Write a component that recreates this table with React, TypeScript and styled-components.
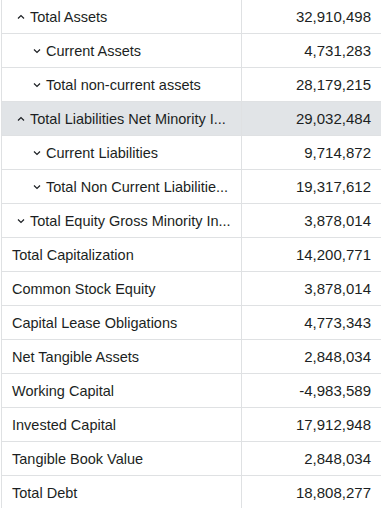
import React from 'react';
import { styled, createGlobalStyle } from 'styled-components';

const GlobalStyle = createGlobalStyle`
  body {
    margin: 0;
    background: #fff;
    font-family: "Liberation Sans", Arial, sans-serif;
  }
`;

const Table = styled.div`
  width: 380px;
  border-left: 1px solid #dfe1e3;
  margin-left: 1px;
`;

const Row = styled.div<{ $active?: boolean }>`
  display: grid;
  grid-template-columns: 240px 1fr;
  height: 34px;
  box-sizing: border-box;
  border-bottom: 1px solid #dfe1e3;
  background: ${(p) => (p.$active ? '#e1e4e7' : '#fff')};
`;

const Label = styled.div<{ $level: number }>`
  display: flex;
  align-items: center;
  gap: 5px;
  min-width: 0;
  padding-left: ${(p) => (p.$level === 0 ? 10 : p.$level === 1 ? 15 : 31)}px;
  padding-right: 4px;
  border-right: 1px solid #dfe1e3;
  font-size: 14.5px;
  color: #1c1f23;
`;

const LabelText = styled.span`
  white-space: nowrap;
`;

const Value = styled.div`
  display: flex;
  align-items: center;
  justify-content: flex-end;
  padding-right: 11px;
  font-size: 15px;
  color: #1c1f23;
`;

const Caret = ({ up }: { up?: boolean }) => (
  <svg width="8" height="6" viewBox="0 0 8 6" style={{ flexShrink: 0 }}>
    <path
      d={up ? 'M1 4.5 L4 1.5 L7 4.5' : 'M1 1.5 L4 4.5 L7 1.5'}
      fill="none"
      stroke="#1c1f23"
      strokeWidth="1.2"
    />
  </svg>
);

type Item = { label: string; value: string; level: number; caret?: 'up' | 'down'; active?: boolean };

const rows: Item[] = [
  { label: 'Total Assets', value: '32,910,498', level: 1, caret: 'up' },
  { label: 'Current Assets', value: '4,731,283', level: 2, caret: 'down' },
  { label: 'Total non-current assets', value: '28,179,215', level: 2, caret: 'down' },
  { label: 'Total Liabilities Net Minority I...', value: '29,032,484', level: 1, caret: 'up', active: true },
  { label: 'Current Liabilities', value: '9,714,872', level: 2, caret: 'down' },
  { label: 'Total Non Current Liabilitie...', value: '19,317,612', level: 2, caret: 'down' },
  { label: 'Total Equity Gross Minority In...', value: '3,878,014', level: 1, caret: 'down' },
  { label: 'Total Capitalization', value: '14,200,771', level: 0 },
  { label: 'Common Stock Equity', value: '3,878,014', level: 0 },
  { label: 'Capital Lease Obligations', value: '4,773,343', level: 0 },
  { label: 'Net Tangible Assets', value: '2,848,034', level: 0 },
  { label: 'Working Capital', value: '-4,983,589', level: 0 },
  { label: 'Invested Capital', value: '17,912,948', level: 0 },
  { label: 'Tangible Book Value', value: '2,848,034', level: 0 },
  { label: 'Total Debt', value: '18,808,277', level: 0 },
];

const App = () => {
  return (
    <>
      <GlobalStyle />
      <Table>
        {rows.map((r) => (
          <Row key={r.label} $active={r.active}>
            <Label $level={r.level}>
              {r.caret && <Caret up={r.caret === 'up'} />}
              <LabelText>{r.label}</LabelText>
            </Label>
            <Value>{r.value}</Value>
          </Row>
        ))}
      </Table>
    </>
  );
};

export default App;
